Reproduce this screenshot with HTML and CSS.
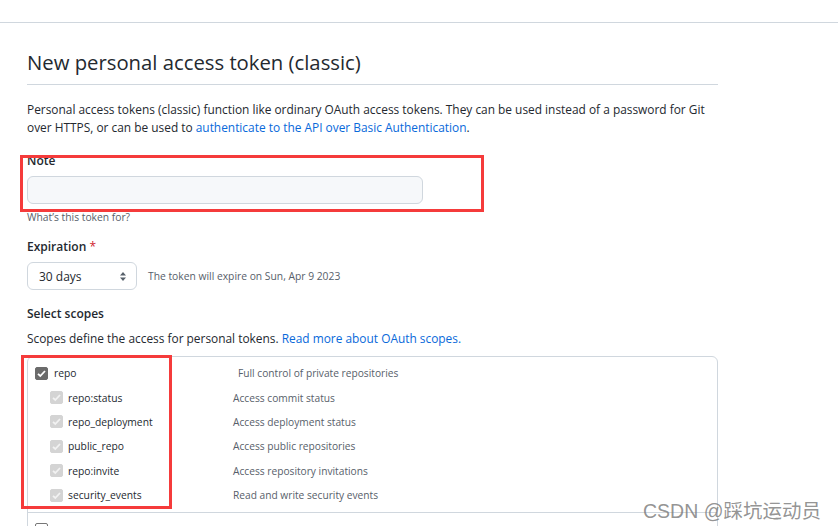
FILE: index.html
```html
<!DOCTYPE html>
<html lang="en">
<head>
<meta charset="utf-8">
<title>New personal access token (classic)</title>
<link rel="stylesheet" href="styles.css">
</head>
<body>
<div class="topbar"></div>
<main class="page">
  <h2 class="title">New personal access token (classic)</h2>
  <p class="intro">Personal access tokens (classic) function like ordinary OAuth access tokens. They can be used instead of a password for Git over HTTPS, or can be used to <a href="#">authenticate to the API over Basic Authentication</a>.</p>

  <div class="field note-field">
    <label class="label">Note</label>
    <input class="input" type="text">
    <div class="hint">What’s this token for?</div>
  </div>

  <div class="field exp-field">
    <label class="label">Expiration <span class="req">*</span></label>
    <div class="exp-row">
      <div class="select">30 days
        <svg class="updown" width="8" height="11" viewBox="0 0 8 11"><path d="M4 1 L7 4.5 H1 Z M4 10 L7 6.5 H1 Z" fill="#57606a"/></svg>
      </div>
      <span class="exp-note">The token will expire on Sun, Apr 9 2023</span>
    </div>
  </div>

  <div class="field scope-field">
    <label class="label">Select scopes</label>
    <p class="scopes-desc">Scopes define the access for personal tokens. <a href="#">Read more about OAuth scopes.</a></p>
    <div class="scopes">
      <div class="group">
        <div class="row main">
          <span class="cb checked"><svg width="13" height="13" viewBox="0 0 13 13"><path d="M3 6.8 L5.3 9 L10 4" stroke="#fff" stroke-width="1.8" fill="none"/></svg></span>
          <span class="name">repo</span>
          <span class="desc">Full control of private repositories</span>
        </div>
        <div class="row sub">
          <span class="cb disabled"><svg width="13" height="13" viewBox="0 0 13 13"><path d="M3 6.8 L5.3 9 L10 4" stroke="#f2f2f2" stroke-width="1.8" fill="none"/></svg></span>
          <span class="name">repo:status</span>
          <span class="desc">Access commit status</span>
        </div>
        <div class="row sub">
          <span class="cb disabled"><svg width="13" height="13" viewBox="0 0 13 13"><path d="M3 6.8 L5.3 9 L10 4" stroke="#f2f2f2" stroke-width="1.8" fill="none"/></svg></span>
          <span class="name">repo_deployment</span>
          <span class="desc">Access deployment status</span>
        </div>
        <div class="row sub">
          <span class="cb disabled"><svg width="13" height="13" viewBox="0 0 13 13"><path d="M3 6.8 L5.3 9 L10 4" stroke="#f2f2f2" stroke-width="1.8" fill="none"/></svg></span>
          <span class="name">public_repo</span>
          <span class="desc">Access public repositories</span>
        </div>
        <div class="row sub">
          <span class="cb disabled"><svg width="13" height="13" viewBox="0 0 13 13"><path d="M3 6.8 L5.3 9 L10 4" stroke="#f2f2f2" stroke-width="1.8" fill="none"/></svg></span>
          <span class="name">repo:invite</span>
          <span class="desc">Access repository invitations</span>
        </div>
        <div class="row sub">
          <span class="cb disabled"><svg width="13" height="13" viewBox="0 0 13 13"><path d="M3 6.8 L5.3 9 L10 4" stroke="#f2f2f2" stroke-width="1.8" fill="none"/></svg></span>
          <span class="name">security_events</span>
          <span class="desc">Read and write security events</span>
        </div>
      </div>
      <div class="group">
        <div class="row main">
          <span class="cb"></span>
          <span class="name">workflow</span>
          <span class="desc">Update GitHub Action workflows</span>
        </div>
      </div>
    </div>
  </div>
</main>
<div class="mark mark-note"></div>
<div class="mark mark-repo"></div>
<div class="watermark">CSDN @踩坑运动员</div>
</body>
</html>
```
FILE: styles.css
```css
* { box-sizing: border-box; }
html, body { margin: 0; padding: 0; background: #fff; }
body {
  font-family: "Open Sans", "Noto Sans CJK SC", sans-serif;
  color: #24292f;
  font-size: 12px;
  overflow: hidden;
  height: 526px;
  position: relative;
}
a { color: #0969da; text-decoration: none; }
.topbar { height: 23px; border-bottom: 1px solid #d0d7de; }
.page { width: 718px; padding-left: 27px; }
.title {
  margin: 23px 0 0;
  font-size: 20.3px;
  font-weight: 400;
  line-height: 32px;
  padding-bottom: 6px;
  border-bottom: 1px solid #d0d7de;
}
.intro { margin: 15px 0 0; line-height: 18px; font-size: 11.9px; }
.field { margin-top: 18px; }
.note-field { margin-top: 16px; }
.exp-field { margin-top: 13px; }
.scope-field { margin-top: 15px; }
.label { display: block; font-weight: 600; font-size: 12px; line-height: 18px; }
.req { color: #cf222e; font-weight: 400; }
.input {
  display: block;
  margin-top: 6px;
  width: 396px;
  height: 28px;
  background: #f6f8fa;
  border: 1px solid #d0d7de;
  border-radius: 6px;
}
.hint { font-size: 10.3px; color: #57606a; margin-top: 5px; line-height: 16px; }
.exp-row { display: flex; align-items: center; gap: 11px; margin-top: 6px; }
.select {
  width: 110px; height: 28px;
  border: 1px solid #d0d7de; border-radius: 6px;
  display: flex; align-items: center; justify-content: space-between;
  padding: 0 9px 0 11px;
  font-size: 12px;
}
.exp-note { font-size: 10.3px; color: #57606a; }
.scopes-desc { margin: 6px 0 0; line-height: 18px; font-size: 11.9px; }
.scopes {
  margin-top: 9px;
  border: 1px solid #d0d7de;
  border-radius: 6px;
}
.group { border-bottom: 1px solid #d0d7de; padding: 4px 0 5px; }
.group:last-child { border-bottom: none; }
.row { display: flex; align-items: center; height: 24.4px; font-size: 10.3px; }
.row .name { color: #24292f; }
.row .desc { color: #57606a; font-size: 10.2px; }
.row.main { padding-left: 7px; }
.row.main .cb { margin-right: 6px; }
.row.main .name { width: 184px; }
.row.sub { padding-left: 22px; }
.row.sub .cb { margin-right: 5px; }
.row.sub .name { width: 165px; }
.cb {
  width: 13px; height: 13px; border-radius: 2px;
  border: 1px solid #767676; background: #fff;
  display: inline-flex; align-items: center; justify-content: center;
  flex: none;
}
.cb svg { display: block; margin: -1px; }
.cb.checked { background: #6b6b6b; border-color: #6b6b6b; }
.cb.disabled { background: #d4d4d4; border-color: #d4d4d4; }
.mark { position: absolute; border: 3px solid #f53b3b; }
.mark-note { left: 20px; top: 155px; width: 464px; height: 57px; }
.mark-repo { left: 21px; top: 355px; width: 151px; height: 154px; }
.watermark {
  position: absolute; left: 643px; top: 495px;
  font-family: "Liberation Sans", "Noto Sans CJK SC", sans-serif;
  font-size: 19.5px; color: rgba(120,120,120,0.8);
  white-space: nowrap;
}
```
